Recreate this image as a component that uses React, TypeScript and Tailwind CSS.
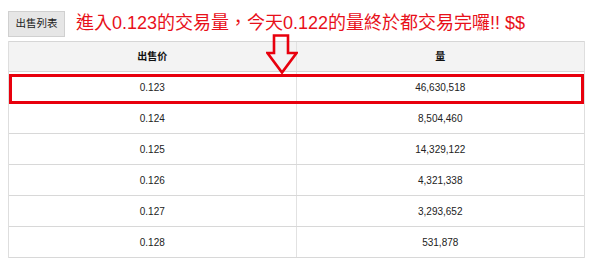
const ROWS = [
  { price: "0.123", amount: "46,630,518" },
  { price: "0.124", amount: "8,504,460" },
  { price: "0.125", amount: "14,329,122" },
  { price: "0.126", amount: "4,321,338" },
  { price: "0.127", amount: "3,293,652" },
  { price: "0.128", amount: "531,878" },
];

const FONT = "font-['Liberation_Sans','Noto_Sans_CJK_TC',sans-serif]";

export default function App() {
  return (
    <main lang="zh-Hant" className={`relative w-[600px] h-[268px] bg-white ${FONT}`}>
      {/* Top bar */}
      <div className="flex items-start pl-2 pt-[11px] h-[41px]">
        <button className="h-[26px] w-[57px] bg-[#e6e6e6] border border-[#d0d0d0] text-[10.5px] text-[#222]">
          出售列表
        </button>
        <span className="ml-[11px] -mt-[2px] text-[18px] leading-[28px] text-[#e8101a] whitespace-nowrap">
          進入0.123的交易量，今天0.122的量終於都交易完囉!! $$
        </span>
      </div>

      {/* Table */}
      <div className="mx-2 w-[577px] border-l border-r border-[#dedede]">
        <div
          lang="zh-Hans"
          className="grid grid-cols-2 h-[31px] bg-[#f3f3f3] border-t border-b border-[#d6d6d6] text-[10px] font-bold text-[#111] font-['Liberation_Sans','Noto_Sans_CJK_SC',sans-serif]"
        >
          <div className="flex items-center justify-center border-r border-[#e2e2e2]">出售价</div>
          <div className="flex items-center justify-center">量</div>
        </div>
        {ROWS.map((r) => (
          <div
            key={r.price}
            className="grid grid-cols-2 h-[31px] border-b border-[#d8d8d8] text-[10px] text-[#222]"
          >
            <div className="flex items-center justify-center border-r border-[#e2e2e2]">{r.price}</div>
            <div className="flex items-center justify-center">{r.amount}</div>
          </div>
        ))}
      </div>

      {/* Annotations */}
      <div className="absolute left-[9px] top-[74px] w-[575px] h-[30px] border-[3px] border-[#e8000d]" />
      <svg className="absolute left-[266px] top-[34px]" width="32" height="41" viewBox="0 0 32 41">
        <polygon
          points="8,1.5 22,1.5 22,19 30.5,19 16,38.5 1.5,19 8,19"
          fill="none"
          stroke="#e8000d"
          strokeWidth="2.6"
          strokeLinejoin="miter"
        />
      </svg>
    </main>
  );
}
